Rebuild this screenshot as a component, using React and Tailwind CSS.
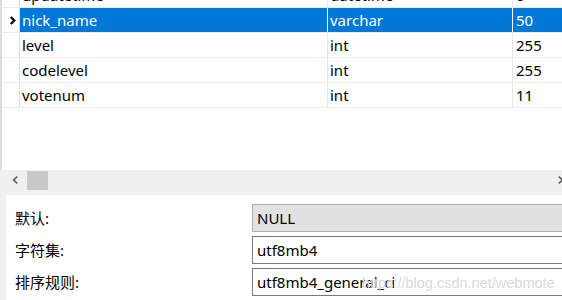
import React from "react";

const rows = [
  { name: "updatetime", type: "datetime", len: "0" },
  { name: "nick_name", type: "varchar", len: "50", selected: true },
  { name: "level", type: "int", len: "255" },
  { name: "codelevel", type: "int", len: "255" },
  { name: "votenum", type: "int", len: "11" },
];

const fields = [
  { label: "默认:", value: "NULL", disabled: true },
  { label: "字符集:", value: "utf8mb4" },
  { label: "排序规则:", value: "utf8mb4_general_ci" },
];

const Chevron = ({ dir = "right", className, width = 2 }) => (
  <svg viewBox="0 0 8 10" className={className}>
    <path
      d={dir === "right" ? "M2 1 L6 5 L2 9" : "M6 1 L2 5 L6 9"}
      fill="none"
      stroke="currentColor"
      strokeWidth={width}
    />
  </svg>
);

export default function App() {
  return (
    <div
      className="relative w-[562px] h-[300px] overflow-hidden bg-white text-[15px] text-black"
      style={{ fontFamily: '"Noto Sans", "Noto Sans CJK SC", sans-serif' }}
    >
      {/* field grid */}
      <div className="h-[170px] overflow-hidden border-l-2 border-[#dcdcdc]">
        <div className="-mt-[17px]">
          {rows.map((r) => (
            <div key={r.name} className="flex h-[25px] border-b border-[#ececec]">
              <div className="w-[18px] shrink-0 border-r border-[#dadada] flex items-center justify-end pr-[3px]">
                {r.selected && <Chevron width={2.6} className="w-[7px] h-[11px] text-black" />}
              </div>
              <div
                className={`w-[308px] shrink-0 pl-[2px] flex items-center leading-none border-r ${
                  r.selected ? "bg-[#0078d7] text-white border-white" : "border-[#e6e6e6]"
                }`}
              >
                {r.name}
              </div>
              <div
                className={`w-[185px] shrink-0 pl-[2px] flex items-center leading-none border-r ${
                  r.selected ? "bg-[#0078d7] text-white border-white" : "border-[#e6e6e6]"
                }`}
              >
                {r.type}
              </div>
              <div
                className={`flex-1 pl-[3px] flex items-center leading-none ${
                  r.selected ? "bg-[#0078d7] text-white" : ""
                }`}
              >
                {r.len}
              </div>
            </div>
          ))}
        </div>
      </div>

      {/* horizontal scrollbar */}
      <div className="h-[25px] bg-[#f0f0f0] flex items-start">
        <div className="w-[27px] h-[20px] flex items-center justify-end pr-[8px]">
          <Chevron dir="left" className="w-[7px] h-[10px] text-[#606060]" />
        </div>
        <div className="w-[21px] h-[19px] mt-[1px] bg-[#c8c8c8]" />
        <div className="flex-1 h-[20px] flex items-center justify-end">
          <Chevron className="w-[7px] h-[10px] -mr-[2px] text-[#606060]" />
        </div>
      </div>

      {/* properties */}
      <div className="h-[105px] flex">
        <div className="w-[6px] bg-[#f0f0f0]" />
        <div className="flex-1 pt-[9px] flex flex-col gap-[4px]">
          {fields.map((f) => (
            <div key={f.label} className="flex items-center h-[28px]">
              <div className="w-[246px] pl-[9px] leading-none">{f.label}</div>
              <div
                className={`flex-1 h-[28px] -mr-[10px] pl-[4px] flex items-center leading-none border ${
                  f.disabled ? "bg-[#e1e1e1] border-[#adadad]" : "bg-white border-[#7a7a7a]"
                }`}
              >
                {f.value}
              </div>
            </div>
          ))}
        </div>
      </div>

      {/* watermark */}
      <div
        className="absolute left-[362px] top-[273px] text-[14.5px] text-[#d9d9d9] whitespace-nowrap pointer-events-none"
        style={{ fontFamily: '"Liberation Sans", Arial, sans-serif' }}
      >
        https://blog.csdn.net/webmote
      </div>
    </div>
  );
}
